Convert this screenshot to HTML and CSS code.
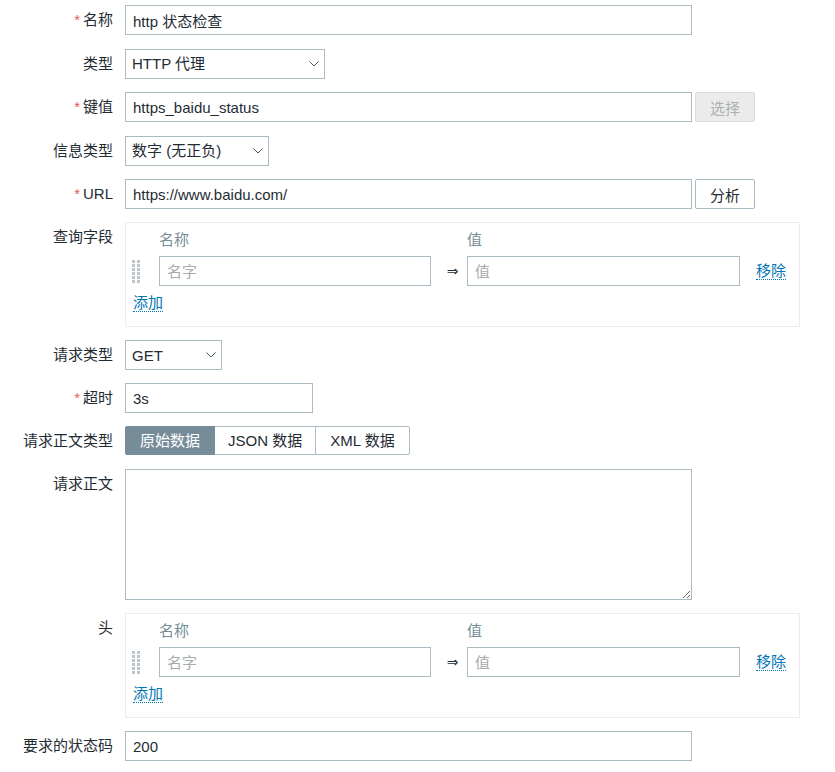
FILE: index.html
```html
<!DOCTYPE html>
<html lang="zh-CN">
<head>
<meta charset="utf-8">
<title>监控项</title>
<link rel="stylesheet" href="styles.css">
</head>
<body>
<form class="item-form">
  <label class="label required" for="name">名称</label>
  <div class="field"><input id="name" class="text w-wide" type="text" value="http 状态检查"></div>

  <label class="label" for="type">类型</label>
  <div class="field">
    <span class="select-wrap w-type">
      <select id="type"><option>HTTP 代理</option></select>
      <svg class="chevron" width="10" height="6" viewBox="0 0 10 6"><polyline points="0.5,0.5 5,5 9.5,0.5"/></svg>
    </span>
  </div>

  <label class="label required" for="key">键值</label>
  <div class="field inline">
    <input id="key" class="text w-wide" type="text" value="https_baidu_status">
    <button type="button" class="btn btn-disabled" disabled>选择</button>
  </div>

  <label class="label" for="value-type">信息类型</label>
  <div class="field">
    <span class="select-wrap w-value-type">
      <select id="value-type"><option>数字 (无正负)</option></select>
      <svg class="chevron" width="10" height="6" viewBox="0 0 10 6"><polyline points="0.5,0.5 5,5 9.5,0.5"/></svg>
    </span>
  </div>

  <label class="label required" for="url">URL</label>
  <div class="field inline">
    <input id="url" class="text w-wide" type="text" value="https://www.baidu.com/">
    <button type="button" class="btn">分析</button>
  </div>

  <div class="label">查询字段</div>
  <div class="field">
    <div class="pair-box">
      <div class="pair-grid">
        <div></div><div class="pair-head">名称</div><div></div><div class="pair-head">值</div><div></div>
        <div class="drag">
          <svg width="8" height="23" viewBox="0 0 8 23">
            <g fill="#bcc6cc">
              <rect x="0" y="0" width="3" height="3"/><rect x="5" y="0" width="3" height="3"/>
              <rect x="0" y="4" width="3" height="3"/><rect x="5" y="4" width="3" height="3"/>
              <rect x="0" y="8" width="3" height="3"/><rect x="5" y="8" width="3" height="3"/>
              <rect x="0" y="12" width="3" height="3"/><rect x="5" y="12" width="3" height="3"/>
              <rect x="0" y="16" width="3" height="3"/><rect x="5" y="16" width="3" height="3"/>
              <rect x="0" y="20" width="3" height="3"/><rect x="5" y="20" width="3" height="3"/>
            </g>
          </svg>
        </div>
        <input class="text" type="text" placeholder="名字">
        <div class="arrow">⇒</div>
        <input class="text" type="text" placeholder="值">
        <div class="remove"><a class="link" href="#">移除</a></div>
      </div>
      <div class="add-row"><a class="link" href="#">添加</a></div>
    </div>
  </div>

  <label class="label" for="method">请求类型</label>
  <div class="field">
    <span class="select-wrap w-method">
      <select id="method"><option>GET</option></select>
      <svg class="chevron" width="10" height="6" viewBox="0 0 10 6"><polyline points="0.5,0.5 5,5 9.5,0.5"/></svg>
    </span>
  </div>

  <label class="label required" for="timeout">超时</label>
  <div class="field"><input id="timeout" class="text w-timeout" type="text" value="3s"></div>

  <div class="label">请求正文类型</div>
  <div class="field">
    <div class="radio-list">
      <span class="seg selected">原始数据</span>
      <span class="seg">JSON 数据</span>
      <span class="seg">XML 数据</span>
    </div>
  </div>

  <label class="label" for="body">请求正文</label>
  <div class="field"><textarea id="body" class="text-area"></textarea></div>

  <div class="label">头</div>
  <div class="field">
    <div class="pair-box">
      <div class="pair-grid">
        <div></div><div class="pair-head">名称</div><div></div><div class="pair-head">值</div><div></div>
        <div class="drag">
          <svg width="8" height="23" viewBox="0 0 8 23">
            <g fill="#bcc6cc">
              <rect x="0" y="0" width="3" height="3"/><rect x="5" y="0" width="3" height="3"/>
              <rect x="0" y="4" width="3" height="3"/><rect x="5" y="4" width="3" height="3"/>
              <rect x="0" y="8" width="3" height="3"/><rect x="5" y="8" width="3" height="3"/>
              <rect x="0" y="12" width="3" height="3"/><rect x="5" y="12" width="3" height="3"/>
              <rect x="0" y="16" width="3" height="3"/><rect x="5" y="16" width="3" height="3"/>
              <rect x="0" y="20" width="3" height="3"/><rect x="5" y="20" width="3" height="3"/>
            </g>
          </svg>
        </div>
        <input class="text" type="text" placeholder="名字">
        <div class="arrow">⇒</div>
        <input class="text" type="text" placeholder="值">
        <div class="remove"><a class="link" href="#">移除</a></div>
      </div>
      <div class="add-row"><a class="link" href="#">添加</a></div>
    </div>
  </div>

  <label class="label" for="status">要求的状态码</label>
  <div class="field"><input id="status" class="text w-wide" type="text" value="200"></div>
</form>
</body>
</html>
```

FILE: styles.css
```css
html, body {
  margin: 0;
  padding: 0;
  background: #fff;
}

body {
  font-family: "Liberation Sans", Arial, "Noto Sans CJK SC", sans-serif;
  font-size: 15px;
  color: #1f2c33;
}

/* two-column form: right-aligned labels, controls on the right */
.item-form {
  display: grid;
  grid-template-columns: 113px auto;
  grid-template-rows: 30.5px 30.5px 30.5px 30.5px;
  column-gap: 12px;
  row-gap: 13px;
  justify-content: start;
  align-items: start;
  padding-top: 5px;
}

.label {
  height: 30px;
  line-height: 30px;
  text-align: right;
  white-space: nowrap;
  color: #1f2c33;
}

.required::before {
  content: "*";
  color: #e45959;
  margin-right: 3px;
}

.field {
  display: flex;
  align-items: flex-start;
  min-width: 0;
}

.field.inline {
  align-items: center;
  gap: 3px;
}

/* text inputs */
.text,
.select-wrap select,
.text-area {
  box-sizing: border-box;
  font: inherit;
  color: #1f2c33;
  background: #fff;
  border: 1px solid #acbbc2;
  border-radius: 0;
  outline: none;
  margin: 0;
}

.text {
  display: block;
  height: 30px;
  padding: 0 7px;
}

.text::placeholder {
  color: #a5abae;
}

.w-wide { width: 567px; }
.w-timeout { width: 188px; }

/* selects */
.select-wrap {
  position: relative;
  display: block;
  height: 30px;
}

.select-wrap select {
  display: block;
  -webkit-appearance: none;
  appearance: none;
  width: 100%;
  height: 30px;
  padding: 0 24px 0 6px;
}

.w-type { width: 200px; }
.w-value-type { width: 144px; }
.w-method { width: 97px; }

.chevron {
  position: absolute;
  right: 6px;
  top: 12px;
  fill: none;
  stroke: #4a5860;
  stroke-width: 1;
  pointer-events: none;
}

/* buttons */
.btn {
  box-sizing: border-box;
  width: 60px;
  height: 30px;
  padding: 0;
  font: inherit;
  color: #1f2c33;
  background: #fff;
  border: 1px solid #acbbc2;
  border-radius: 2px;
}

.btn-disabled {
  color: #acb1b3;
  background: #ebebeb;
  border-color: #d9dcde;
}

/* name/value pair tables */
.pair-box {
  box-sizing: border-box;
  width: 675px;
  height: 105px;
  border: 1px solid #ebeef0;
  padding: 8px 5px 0;
}

.pair-grid {
  display: grid;
  grid-template-columns: 28px 272px 36px 273px auto;
  grid-template-rows: 18px 30px;
  row-gap: 7px;
  align-items: center;
}

.pair-head {
  height: 18px;
  line-height: 18px;
  color: #768d99;
}

.pair-grid .text {
  width: 100%;
}

.drag {
  height: 30px;
  display: flex;
  align-items: center;
  padding-left: 1px;
}

.drag svg {
  display: block;
}

.arrow {
  height: 30px;
  padding-left: 7px;
  text-align: center;
  line-height: 30px;
  font-family: "DejaVu Sans", sans-serif;
  font-size: 14px;
  color: #1f2c33;
}

.remove {
  height: 30px;
  padding-left: 16px;
  line-height: 30px;
}

.add-row {
  height: 18px;
  margin-top: 8px;
  padding-left: 2px;
  line-height: 18px;
}

.link {
  color: #0275b8;
  text-decoration: none;
  border-bottom: 1px dotted #0275b8;
}

/* segmented radio control */
.radio-list {
  display: flex;
}

.seg {
  box-sizing: border-box;
  height: 29px;
  line-height: 27px;
  padding: 0 13px;
  border: 1px solid #acbbc2;
  background: #fff;
  color: #1f2c33;
  white-space: nowrap;
}

.seg + .seg {
  margin-left: -1px;
}

.seg:first-child {
  padding: 0 14px;
  border-radius: 2px 0 0 2px;
}

.seg:last-child {
  padding: 0 14px;
  border-radius: 0 2px 2px 0;
}

.seg.selected {
  background: #768d99;
  border-color: #768d99;
  color: #fff;
  position: relative;
}

/* request body */
.text-area {
  display: block;
  width: 567px;
  height: 131px;
  padding: 4px 7px;
}
```
